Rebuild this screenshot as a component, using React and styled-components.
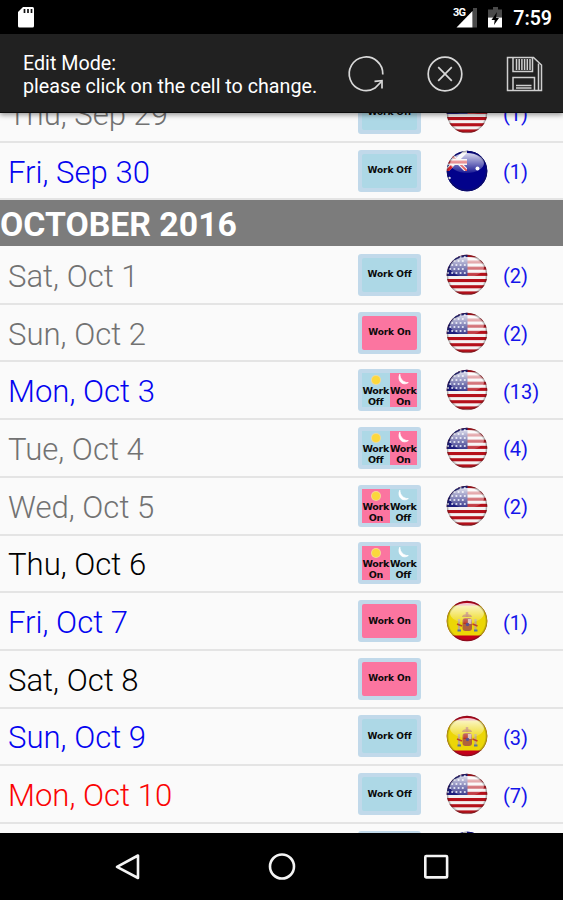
import React from 'react';
import styled, { createGlobalStyle, css } from 'styled-components';

const GlobalStyle = createGlobalStyle`
  * {
    box-sizing: border-box;
  }

  body {
    margin: 0;
    background: #000;
    font-family: Roboto, "Liberation Sans", sans-serif;
  }
`;

const days = [
  { date: 'Thu, Sep 29', color: 'gray', shift: ['off'], flag: 'us', count: 1 },
  { date: 'Fri, Sep 30', color: 'blue', shift: ['off'], flag: 'au', count: 1 },
  { month: 'OCTOBER 2016' },
  { date: 'Sat, Oct 1', color: 'gray', shift: ['off'], flag: 'us', count: 2 },
  { date: 'Sun, Oct 2', color: 'gray', shift: ['on'], flag: 'us', count: 2 },
  { date: 'Mon, Oct 3', color: 'blue', shift: ['off', 'on'], flag: 'us', count: 13 },
  { date: 'Tue, Oct 4', color: 'gray', shift: ['off', 'on'], flag: 'us', count: 4 },
  { date: 'Wed, Oct 5', color: 'gray', shift: ['on', 'off'], flag: 'us', count: 2 },
  { date: 'Thu, Oct 6', color: 'black', shift: ['on', 'off'] },
  { date: 'Fri, Oct 7', color: 'blue', shift: ['on'], flag: 'es', count: 1 },
  { date: 'Sat, Oct 8', color: 'black', shift: ['on'] },
  { date: 'Sun, Oct 9', color: 'blue', shift: ['off'], flag: 'es', count: 3 },
  { date: 'Mon, Oct 10', color: 'red', shift: ['off'], flag: 'us', count: 7 },
  { date: '', color: 'gray', shift: [], flag: 'au' },
];

const textColors = {
  gray: '#727272',
  blue: '#0404f0',
  black: '#000000',
  red: '#fa0404',
};

const shiftColors = { on: '#fb75a0', off: '#add8e6' };
const shiftLabels = { on: 'On', off: 'Off' };

const SunIcon = () => (
  <svg width="12" height="12" viewBox="0 0 12 12">
    <circle cx="6" cy="7" r="5" fill="#f3d994" />
    <circle cx="6" cy="7" r="4" fill="#fbd83c" />
  </svg>
);

const MoonIcon = () => (
  <svg width="12" height="12" viewBox="0 0 12 12">
    <path d="M2.800 1.200C-.2 7.500 5.500 13.500 11.300 9.600 6.600 9.800 3 6 2.800 1.200z" fill="#fff" stroke="#fff" strokeWidth=".8" />
  </svg>
);

const stripes = [0, 1, 2, 3, 4, 5, 6];

const UsFlag = () => (
  <>
    <rect width="42" height="42" fill="#f4f1f1" />
    {stripes.map((i) => (
      <rect key={i} y={0.2 + i * 6.2} width="42" height="3.100" fill="#b5101a" />
    ))}
    <rect width="21.500" height="22" fill="#1c1c7c" />
    {[3, 7, 11, 15, 19].map((y, row) =>
      [2, 6.2, 10.4, 14.6, 18.8].map((x) => (
        <circle key={`${x}-${y}`} cx={x + (row % 2 ? -2 : 0)} cy={y} r="1.100" fill="#d5d8ec" />
      ))
    )}
  </>
);

const AuFlag = () => (
  <>
    <rect width="42" height="42" fill="#02028b" />
    <path d="M0 0l21 21M21 0L0 21" stroke="#eee" strokeWidth="4" />
    <path d="M0 0l21 21" stroke="#d4232b" strokeWidth="1.800" />
    <path d="M2 12h19" stroke="#eee" strokeWidth="6" />
    <path d="M2 12h19M1 21l5-5" stroke="#d4232b" strokeWidth="3" />
    <path d="M0 21h21V0h21v42H0z" fill="#02028b" />
    <circle cx="31.500" cy="18.500" r="2" fill="#fff" />
    <circle cx="3.500" cy="28" r="1.200" fill="#fff" />
  </>
);

const EsFlag = () => (
  <>
    <rect width="42" height="42" fill="#c4001a" />
    <rect y="5.500" width="42" height="30" fill="#ecd606" />
    <rect x="16.500" y="18" width="9.500" height="13" rx="3" fill="#b0623c" />
    <path d="M16 17c0-4 10-4 10 0z" fill="#b8762c" />
    <path d="M21 12v5" stroke="#b06030" strokeWidth="2.500" />
    <rect x="17.500" y="19" width="4" height="5" fill="#bb3020" />
    <rect x="22" y="19" width="3.500" height="5" fill="#d6b4ae" />
    <circle cx="21.500" cy="24.500" r="1.800" fill="#59508f" />
    <path d="M13 19v12M29.500 19v12" stroke="#c2ac80" strokeWidth="2.200" />
    <path d="M11 24l5 2M26.500 24l5 2" stroke="#c34226" strokeWidth="1.600" />
    <path d="M11.500 30.500h3.500M28 30.500h3.500" stroke="#56739c" strokeWidth="2" />
  </>
);

const flags = { us: UsFlag, au: AuFlag, es: EsFlag };

const Flag = ({ code, id }) => {
  const Design = flags[code];
  return (
    <svg width="42" height="42" viewBox="0 0 42 42">
      <defs>
        <clipPath id={`round-${id}`}>
          <circle cx="21" cy="21" r="20.300" />
        </clipPath>
        <linearGradient id={`gloss-${id}`} x1="0" y1="0" x2="0" y2="1">
          <stop offset="0" stopColor="#fff" stopOpacity=".85" />
          <stop offset="1" stopColor="#fff" stopOpacity=".1" />
        </linearGradient>
        <radialGradient id={`shade-${id}`}>
          <stop offset=".88" stopColor="#222" stopOpacity="0" />
          <stop offset="1" stopColor="#222" stopOpacity=".5" />
        </radialGradient>
      </defs>
      <g clipPath={`url(#round-${id})`}>
        <Design />
        <ellipse cx="21" cy="13" rx="17" ry="10" fill={`url(#gloss-${id})`} />
        <circle cx="21" cy="21" r="20.500" fill={`url(#shade-${id})`} />
      </g>
    </svg>
  );
};

const Shift = ({ shift }) => {
  const split = shift.length > 1;
  return (
    <Chip>
      {shift.map((kind, i) => (
        <ChipHalf key={i} $kind={kind} $split={split}>
          {split && (i === 0 ? <SunIcon /> : <MoonIcon />)}
          {split ? (
            <>
              <span>Work</span>
              <span>{shiftLabels[kind]}</span>
            </>
          ) : (
            <span>Work {shiftLabels[kind]}</span>
          )}
        </ChipHalf>
      ))}
    </Chip>
  );
};

const StatusIcons = () => (
  <svg width="52" height="34" viewBox="0 0 52 34">
    <text x="1" y="16" fontSize="11" fontWeight="700" fill="#fff" letterSpacing="-.8">3G</text>
    <path d="M21 8h4v19.500h-4.500z" fill="#4a4a4a" />
    <path d="M20.500 11v16.500H4.500z" fill="#fff" />
    <path d="M41 7h5v2.500h4V17.500H36V9.500h5z" fill="#4a4a4a" />
    <path d="M36 17.500h14v10H36z" fill="#fff" />
    <path d="M45 12l-5.500 8h3.200l-.7 5 5-7h-3z" fill="#000" />
  </svg>
);

const RefreshIcon = () => (
  <svg width="40" height="40" viewBox="0 0 40 40" fill="none" stroke="#d8d8d8" strokeWidth="1.700">
    <path d="M36.800 20.500A16.800 16.800 0 1 0 29 34L35.500 27.500" />
    <path d="M28.500 27.300l7.500-.6v7.800" />
  </svg>
);

const CancelIcon = () => (
  <svg width="40" height="40" viewBox="0 0 40 40" fill="none" stroke="#d8d8d8" strokeWidth="1.700">
    <circle cx="20" cy="20" r="16.800" />
    <path d="M13.200 13.200l13.600 13.600M26.800 13.200L13.200 26.800" />
  </svg>
);

const SaveIcon = () => (
  <svg width="40" height="40" viewBox="0 0 40 40" fill="none" stroke="#cfcfcf" strokeWidth="1.500">
    <path d="M3.500 3.500h26l8 7.500v25.500h-34z" />
    <path d="M9 4v13.500h19.500V4M12.500 5v11M15.200 5v11M17.900 5v11M20.600 5v11M23.300 5v11M26 5v11" />
    <path d="M9 36V23.500h21.500V36M12 31.500h15.500M12 34h15.500M34.500 9.500V36" />
  </svg>
);

const App = () => (
  <Screen>
    <GlobalStyle />
    <StatusBar>
      <svg width="18" height="22" viewBox="0 0 18 22">
        <path d="M6 1h9.500a1.500 1.500 0 0 1 1.500 1.500V20a1.500 1.500 0 0 1-1.500 1.500h-13A1.500 1.500 0 0 1 1 20V6z" fill="#fff" />
        <path d="M7.500 3v4M11 3v4M14.500 3v4" stroke="#111" strokeWidth="1.700" />
      </svg>
      <StatusRight>
        <StatusIcons />
        <Clock>7:59</Clock>
      </StatusRight>
    </StatusBar>
    <Toolbar>
      <Hint>
        Edit Mode:
        <br />
        please click on the cell to change.
      </Hint>
      <Actions>
        <RefreshIcon />
        <CancelIcon />
        <SaveIcon />
      </Actions>
    </Toolbar>
    <List>
      {days.map((day, i) =>
        day.month ? (
          <MonthHeader key={i}>{day.month}</MonthHeader>
        ) : (
          <Row key={i}>
            <DateLabel $color={day.color}>{day.date}</DateLabel>
            <Shift shift={day.shift} />
            <FlagCell>{day.flag && <Flag code={day.flag} id={i} />}</FlagCell>
            {day.count && <Count>({day.count})</Count>}
          </Row>
        )
      )}
    </List>
    <NavBar>
      <svg width="28" height="30" viewBox="0 0 28 30" fill="none" stroke="#f4f4f4" strokeWidth="2.600" strokeLinejoin="round">
        <path d="M25 3.500v22.500L4 14.800z" />
      </svg>
      <svg width="30" height="30" viewBox="0 0 30 30" fill="none" stroke="#f4f4f4" strokeWidth="2.600">
        <circle cx="15" cy="14.500" r="12" />
      </svg>
      <svg width="28" height="30" viewBox="0 0 28 30" fill="none" stroke="#f4f4f4" strokeWidth="2.600">
        <rect x="3.300" y="4" width="21.800" height="21.400" rx="1" />
      </svg>
    </NavBar>
  </Screen>
);

const Screen = styled.div`
  display: flex;
  flex-direction: column;
  width: 563px;
  height: 900px;
  overflow: hidden;
  background: #000;

  svg {
    display: block;
    flex-shrink: 0;
  }
`;

const StatusBar = styled.div`
  display: flex;
  align-items: center;
  justify-content: space-between;
  height: 34px;
  padding: 0 11px 0 17px;
`;

const StatusRight = styled.div`
  display: flex;
  align-items: center;
  gap: 9px;
`;

const Clock = styled.span`
  color: #fff;
  font-size: 19.5px;
  font-weight: 600;
  line-height: 34px;
  padding-top: 3px;
`;

const Toolbar = styled.div`
  display: flex;
  align-items: center;
  justify-content: space-between;
  height: 79px;
  padding: 2px 19px 0 23px;
  background: #212121;
  border-bottom: 1px solid #0c0c0c;
  z-index: 1;
  box-shadow: 0 2px 5px rgba(0, 0, 0, 0.4);
`;

const Hint = styled.div`
  color: #fff;
  font-size: 19.7px;
  line-height: 23.5px;
  padding-top: 2px;
  white-space: nowrap;
`;

const Actions = styled.div`
  display: flex;
  gap: 39px;
`;

const List = styled.div`
  height: 720px;
  overflow: hidden;
  background: #fafafa;

  > :first-child {
    margin-top: -28px;
  }
`;

const Row = styled.div`
  display: flex;
  align-items: center;
  height: 57.7px;
  padding-left: 8px;
  border-bottom: 2px solid #e4e4e4;
`;

const MonthHeader = styled.div`
  height: 46px;
  margin-bottom: 0.7px;
  background: #7c7c7c;
  color: #fff;
  font-size: 33.8px;
  font-weight: 700;
  line-height: 49px;
`;

const DateLabel = styled.div`
  width: 350px;
  color: ${({ $color }) => textColors[$color]};
  font-size: 31.1px;
  font-weight: 300;
  line-height: 40px;
  padding-top: 4px;
`;

const Chip = styled.div`
  display: flex;
  width: 63px;
  height: 42px;
  padding: 4px;
  border-radius: 3px;
  background: #c1d9ea;
`;

const ChipHalf = styled.div`
  display: flex;
  flex: 1;
  flex-direction: column;
  align-items: center;
  justify-content: center;
  min-width: 0;
  border-radius: ${({ $split }) => ($split ? 0 : 2)}px;
  background: ${({ $kind }) => shiftColors[$kind]};
  color: #0a0a0a;
  font-family: "DejaVu Sans", sans-serif;
  font-size: 9px;
  font-weight: 700;
  letter-spacing: -0.1px;
  line-height: 11px;
  white-space: nowrap;

  ${({ $split }) =>
    $split &&
    css`
      font-size: 9.5px;
      letter-spacing: -0.3px;
    `}
`;

const FlagCell = styled.div`
  width: 42px;
  margin-left: 25px;
`;

const Count = styled.div`
  margin-left: 15px;
  color: #1414ea;
  font-size: 20px;
  line-height: 24px;
  padding-top: 3px;
`;

const NavBar = styled.div`
  display: flex;
  align-items: center;
  justify-content: space-between;
  height: 67px;
  padding: 0 113px;
`;

export default App;
